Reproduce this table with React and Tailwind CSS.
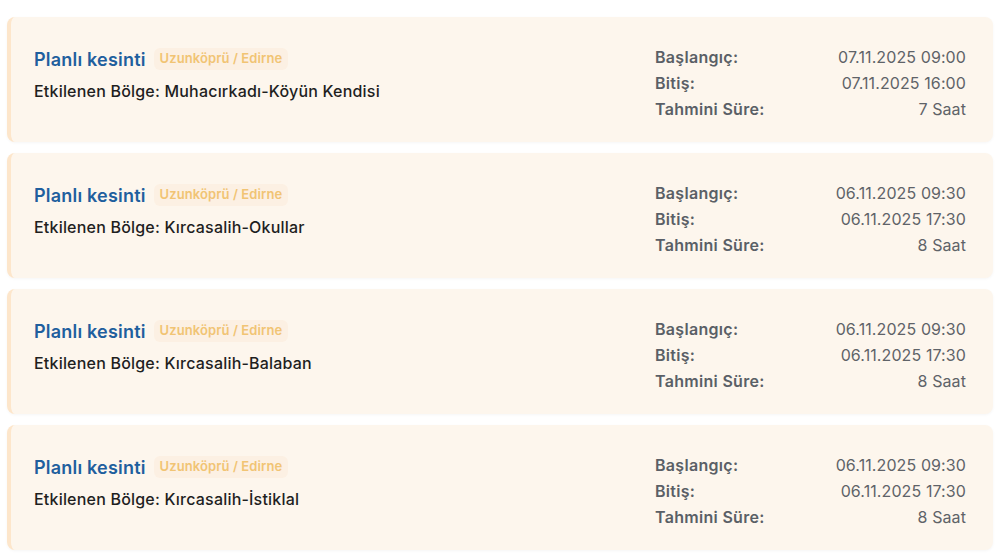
const outages = [
  { area: "Muhacırkadı-Köyün Kendisi", start: "07.11.2025 09:00", end: "07.11.2025 16:00", dur: "7 Saat" },
  { area: "Kırcasalih-Okullar", start: "06.11.2025 09:30", end: "06.11.2025 17:30", dur: "8 Saat" },
  { area: "Kırcasalih-Balaban", start: "06.11.2025 09:30", end: "06.11.2025 17:30", dur: "8 Saat" },
  { area: "Kırcasalih-İstiklal", start: "06.11.2025 09:30", end: "06.11.2025 17:30", dur: "8 Saat" },
];

const Row = ({ label, value }) => (
  <div className="flex justify-between h-[26px] items-center">
    <span className="font-semibold text-[#5a5f66] tracking-[0.3px]">{label}</span>
    <span className="text-[#5f6368] tracking-[0.1px]">{value}</span>
  </div>
);

export default function App() {
  return (
    <div className="min-h-[555px] bg-white pt-[17px] px-[7px] flex flex-col gap-[11px] font-['Inter',sans-serif] text-[16px]">
      {outages.map((o, i) => (
        <div
          key={i}
          className="w-[986px] h-[125px] bg-[#fdf6ed] border-l-[4px] border-[#fde6cb] rounded-lg shadow-[0_1px_3px_rgba(0,0,0,0.04)] flex justify-between pl-[23px] pr-[27px] pt-[28px]"
        >
          <div className="flex flex-col">
            <div className="flex items-center gap-[8px] h-[28px]">
              <span className="text-[18px] font-semibold text-[#1f5f9e] tracking-[0.2px]">Planlı kesinti</span>
              <span className="text-[13px] font-semibold text-[#f1c474] bg-[#fcf0e3] rounded-md px-[6px] py-[1px] tracking-[0.1px]">
                Uzunköprü / Edirne
              </span>
            </div>
            <div className="mt-[6px] text-[#1f1f1f] font-medium tracking-[0.2px]">
              Etkilenen Bölge: {o.area}
            </div>
          </div>
          <div className="w-[311px] flex flex-col -mt-[1px]">
            <Row label="Başlangıç:" value={o.start} />
            <Row label="Bitiş:" value={o.end} />
            <Row label="Tahmini Süre:" value={o.dur} />
          </div>
        </div>
      ))}
    </div>
  );
}
